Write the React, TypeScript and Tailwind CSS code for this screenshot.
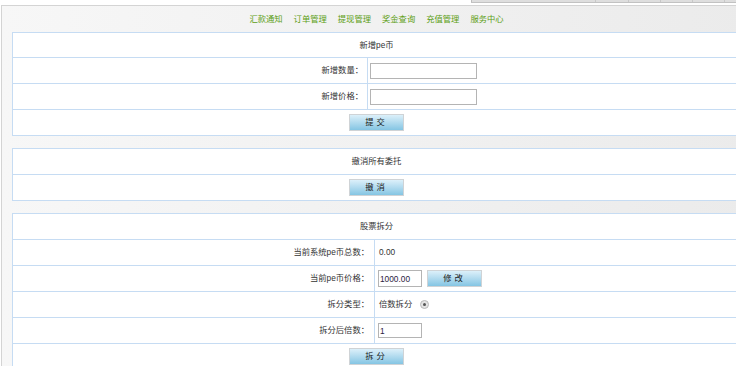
import type { FC, ReactNode } from 'react';

const navItems = ['汇款通知', '订单管理', '提现管理', '奖金查询', '充值管理', '服务中心'];

const Btn: FC<{ label: string }> = ({ label }) => (
  <button
    type="button"
    className="flex h-[17px] w-[55px] items-center justify-center border border-[#cfd3d6] bg-gradient-to-b from-[#dcf0fa] to-[#84c5e3] text-[8.3px] leading-none tracking-[3px] text-[#1a1a1a]"
  >
    {label}
  </button>
);

const Head: FC<{ children: ReactNode; h?: string }> = ({ children, h = 'h-[25px]' }) => (
  <div className={`flex ${h} items-center justify-center`}>{children}</div>
);

const Row: FC<{ label: string; wide?: boolean; children?: ReactNode }> = ({ label, wide, children }) => (
  <div className="flex h-[26px] border-t border-[#c6dcf3]">
    <div
      className={`flex items-center justify-end border-r border-[#c6dcf3] ${
        wide ? 'w-[362px] pr-[5px]' : 'w-[355px] pr-[4px]'
      }`}
    >
      {label}
    </div>
    <div className={`flex items-center ${wide ? 'pl-[3px]' : 'pl-[2px]'}`}>{children}</div>
  </div>
);

const BtnRow: FC<{ label: string }> = ({ label }) => (
  <div className="flex h-[26px] items-center justify-center border-t border-[#c6dcf3]">
    <Btn label={label} />
  </div>
);

export default function App() {
  return (
    <div className="h-[366px] w-[736px] overflow-hidden bg-white font-['Liberation_Sans','Noto_Sans_CJK_SC',sans-serif] text-[8.3px] text-[#333]">
      <div className="flex h-[5px]">
        <div className="ml-[471px] flex h-[3px] flex-1 border-b border-[#c2c2c2] bg-[#dedede]">
          <div className="w-[124px] border-l border-[#bdbdbd]" />
          <div className="w-[33px] border-l border-[#c8c8c8]" />
          <div className="w-[32px] border-l border-[#c8c8c8]" />
          <div className="w-[32px] border-l border-[#c8c8c8]" />
          <div className="w-[32px] border-l border-[#c8c8c8]" />
          <div className="flex-1 border-l border-[#c8c8c8]" />
        </div>
      </div>

      <div className="ml-px w-[750px] border-l border-t border-[#d4d4d4] bg-gradient-to-r from-[#f7f7f7] to-[#ebebeb] px-[10px] pb-4">
        <nav className="flex h-[26px] items-center justify-center gap-[11px] pt-px text-[#5c9e14]">
          {navItems.map((n) => (
            <a key={n} href="#" className="leading-none">
              {n}
            </a>
          ))}
        </nav>

        <div className="flex flex-col gap-[12px]">
          <div className="border border-[#c6dcf3] bg-white">
            <Head h="h-[24px]">新增pe币</Head>
            <Row label="新增数量：">
              <input className="h-[16px] w-[107px] border border-[#b4b4b4] bg-white outline-none" />
            </Row>
            <Row label="新增价格：">
              <input className="h-[16px] w-[107px] border border-[#b4b4b4] bg-white outline-none" />
            </Row>
            <BtnRow label="提交" />
          </div>

          <div className="border border-[#c6dcf3] bg-white">
            <Head>撤消所有委托</Head>
            <BtnRow label="撤消" />
          </div>

          <div className="border border-[#c6dcf3] bg-white">
            <Head>股票拆分</Head>
            <Row wide label="当前系统pe币总数：">
              <span className="pl-px">0.00</span>
            </Row>
            <Row wide label="当前pe币价格：">
              <input
                defaultValue="1000.00"
                className="h-[17px] w-[44px] border border-[#b4b4b4] bg-white px-px text-[8.3px] text-[#2a2340] outline-none"
              />
              <div className="ml-[5px]">
                <Btn label="修改" />
              </div>
            </Row>
            <Row wide label="拆分类型：">
              <span className="pl-px">倍数拆分</span>
              <span className="ml-[8px] flex h-[9px] w-[9px] items-center justify-center rounded-full border border-[#b9b9b9] bg-[#e4e4e4]">
                <span className="h-[3px] w-[3px] rounded-full bg-[#555]" />
              </span>
            </Row>
            <Row wide label="拆分后倍数：">
              <input
                defaultValue="1"
                className="h-[15px] w-[44px] border border-[#b4b4b4] bg-white px-px text-[8.3px] text-[#2a2340] outline-none"
              />
            </Row>
            <BtnRow label="拆分" />
          </div>
        </div>
      </div>
    </div>
  );
}
